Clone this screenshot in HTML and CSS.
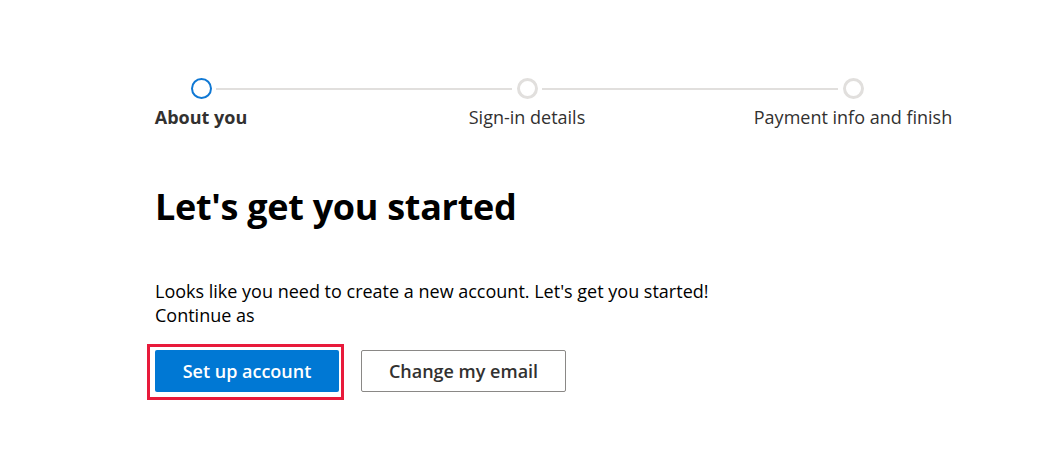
FILE: index.html
```html
<!DOCTYPE html>
<html lang="en">
<head>
<meta charset="utf-8">
<title>Let's get you started</title>
<link rel="stylesheet" href="styles.css">
</head>
<body>
<main class="page">
  <div class="stepper">
    <div class="track">
      <span class="dot dot-active"></span>
      <span class="line"></span>
      <span class="dot"></span>
      <span class="line"></span>
      <span class="dot"></span>
    </div>
    <div class="labels">
      <span class="label label-active">About you</span>
      <span class="label">Sign-in details</span>
      <span class="label">Payment info and finish</span>
    </div>
  </div>
  <h1 class="title">Let's get you started</h1>
  <p class="text">Looks like you need to create a new account. Let's get you started!<br>Continue as</p>
  <div class="actions">
    <div class="focus-ring"><button class="btn btn-primary">Set up account</button></div>
    <button class="btn btn-secondary">Change my email</button>
  </div>
</main>
</body>
</html>
```
FILE: styles.css
```css
html, body {
  margin: 0;
  padding: 0;
  background: #ffffff;
}
body {
  font-family: "Open Sans", "Noto Sans", sans-serif;
  color: #323130;
}
.page {
  padding: 78px 0 0 155px;
}
.track {
  display: flex;
  align-items: center;
  margin-left: 36px;
  width: 673px;
}
.dot {
  box-sizing: border-box;
  width: 21px;
  height: 21px;
  border-radius: 50%;
  border: 3px solid #e1dfdd;
  flex: none;
}
.dot-active {
  border: 2px solid #0f78d4;
}
.line {
  flex: 1;
  height: 2px;
  background: #e1dfdd;
  margin: 0 5px 0 4px;
}
.labels {
  display: grid;
  grid-template-columns: repeat(3, 240px);
  column-gap: 86px;
  margin-left: -74px;
  margin-top: 5px;
}
.label {
  text-align: center;
  font-size: 18px;
  line-height: 26px;
  color: #323130;
}
.label-active {
  font-weight: 700;
}
.title {
  margin: 52px 0 0 0;
  font-size: 36px;
  line-height: 50px;
  font-weight: 700;
  color: #000000;
  letter-spacing: -0.3px;
}
.text {
  margin: 47px 0 0 0;
  font-size: 18px;
  line-height: 24px;
  color: #000000;
}
.actions {
  display: flex;
  align-items: center;
  gap: 17px;
  margin: 17px 0 0 -8px;
}
.focus-ring {
  border: 3px solid #e81a3b;
  padding: 3px 2px 5px 5px;
}
.btn {
  box-sizing: border-box;
  height: 42px;
  border-radius: 2px;
  font-family: inherit;
  font-size: 18px;
  font-weight: 600;
  cursor: pointer;
}
.btn-primary {
  display: block;
  width: 184px;
  background: #0078d4;
  color: #ffffff;
  border: none;
}
.btn-secondary {
  width: 205px;
  background: #ffffff;
  color: #323130;
  border: 1px solid #8a8886;
  margin-top: -2px;
}
```
